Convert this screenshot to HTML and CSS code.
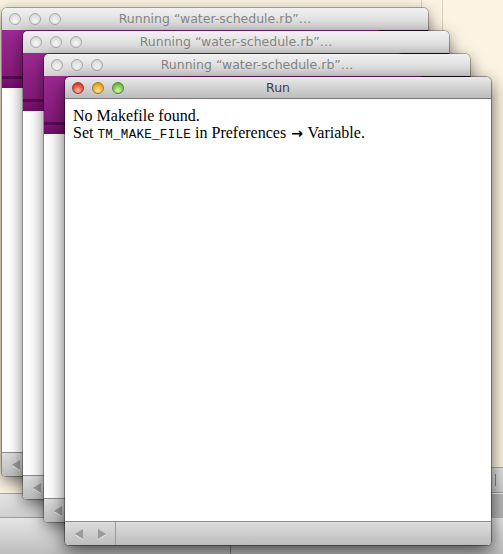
FILE: index.html
```html
<!DOCTYPE html>
<html>
<head>
<meta charset="utf-8">
<link rel="stylesheet" href="styles.css">
</head>
<body>
<div class="desk">
  <div class="bg-doc">
    <span class="gutter g1"></span>
    <span class="gutter g2"></span>
  </div>
  <div class="bg-bar bar-left"></div>
  <div class="bg-bar bar-right"><span class="grip"></span></div>
  <div class="bg-status"><span class="divider"></span></div>

  <div class="win back w1">
    <div class="titlebar">
      <div class="lights"><span class="light"></span><span class="light"></span><span class="light"></span></div>
      <div class="title">Running “water-schedule.rb”…</div>
    </div>
    <div class="toolbar"></div>
    <div class="content"></div>
    <div class="bottombar"><span class="tri tri-left"></span></div>
  </div>

  <div class="win back w2">
    <div class="titlebar">
      <div class="lights"><span class="light"></span><span class="light"></span><span class="light"></span></div>
      <div class="title">Running “water-schedule.rb”…</div>
    </div>
    <div class="toolbar"></div>
    <div class="content"></div>
    <div class="bottombar"><span class="tri tri-left"></span></div>
  </div>

  <div class="win back w3">
    <div class="titlebar">
      <div class="lights"><span class="light"></span><span class="light"></span><span class="light"></span></div>
      <div class="title">Running “water-schedule.rb”…</div>
    </div>
    <div class="toolbar"></div>
    <div class="content"></div>
    <div class="bottombar"><span class="tri tri-left"></span></div>
  </div>

  <div class="win front w4">
    <div class="titlebar">
      <div class="lights"><span class="light red"></span><span class="light yellow"></span><span class="light green"></span></div>
      <div class="title">Run</div>
    </div>
    <div class="content output">
      <p>No Makefile found.</p>
      <p>Set <code>TM_MAKE_FILE</code> in Preferences <span class="arrow">→</span> Variable.</p>
    </div>
    <div class="bottombar"><span class="tri tri-left"></span><span class="tri tri-right"></span><span class="sep"></span></div>
  </div>
</div>
</body>
</html>
```

FILE: styles.css
```css
html, body {
  margin: 0;
  padding: 0;
}
body {
  width: 503px;
  height: 554px;
  overflow: hidden;
  background: #fbf4e2;
  font-family: "DejaVu Sans", sans-serif;
}
.desk {
  position: relative;
  width: 503px;
  height: 554px;
  overflow: hidden;
  background: linear-gradient(#c9c9c9, #b4b4b4);
}

/* background document window */
.bg-doc {
  position: absolute;
  left: 0;
  top: 0;
  width: 503px;
  height: 494px;
  background: #fcf4e2;
}
.gutter {
  position: absolute;
  top: 0;
  bottom: 0;
  width: 1px;
  background: #d9d1bd;
}
.g1 { left: 421px; }
.g2 { left: 442px; }

.bg-bar {
  position: absolute;
  background: linear-gradient(#e4e4e4, #cfcfcf);
  border-top: 1px solid #a9a9a9;
  border-bottom: 1px solid #9a9a9a;
}
.bar-left {
  left: 0;
  top: 493px;
  width: 80px;
  height: 23px;
}
.bar-right {
  left: 470px;
  top: 467px;
  width: 40px;
  height: 24px;
}
.grip {
  position: absolute;
  left: 25px;
  top: 6px;
  width: 1px;
  height: 12px;
  background: #8a8a8a;
}
.bg-status {
  position: absolute;
  left: 0;
  top: 518px;
  width: 503px;
  height: 36px;
  background: linear-gradient(#e6e6e6, #bdbdbd);
}
.divider {
  position: absolute;
  left: 230px;
  top: 0;
  bottom: 0;
  width: 1px;
  background: #7d7d7d;
}

/* windows */
.win {
  position: absolute;
  width: 426px;
  height: 468px;
  display: flex;
  flex-direction: column;
  border-radius: 5px 5px 4px 4px;
  overflow: hidden;
  background: #fff;
  box-shadow: 0 0 0 1px rgba(0, 0, 0, 0.28), 0 5px 16px rgba(0, 0, 0, 0.55);
}
.w4 {
  box-shadow: 0 0 0 1px rgba(0, 0, 0, 0.35), 0 6px 18px rgba(0, 0, 0, 0.65);
}
.w1 { left: 2px; top: 8px; }
.w2 { left: 23px; top: 31px; }
.w3 { left: 44px; top: 54px; }
.w4 { left: 65px; top: 77px; }

.titlebar {
  height: 22px;
  flex: none;
  display: grid;
  grid-template-columns: 1fr auto 1fr;
  align-items: center;
  background: linear-gradient(#f1f1f1, #d3d3d3);
  box-sizing: border-box;
}
.front .titlebar {
  background: linear-gradient(#e9e9e9, #bcbcbc);
  border-bottom: 1px solid #787878;
}
.lights {
  display: flex;
  gap: 8px;
  padding-left: 7px;
}
.light {
  width: 12px;
  height: 12px;
  border-radius: 50%;
  box-sizing: border-box;
  border: 1px solid #a9a9a9;
  background: radial-gradient(circle at 50% 70%, #fafafa 0%, #e2e2e2 55%, #cdcdcd 100%);
}
.light.red {
  border-color: #9b3a32;
  background: radial-gradient(circle at 50% 75%, #ffc4b8 0%, #ee5c50 45%, #c3261b 100%);
}
.light.yellow {
  border-color: #a67526;
  background: radial-gradient(circle at 50% 75%, #ffe7a6 0%, #f6b73f 45%, #cf8515 100%);
}
.light.green {
  border-color: #4b8a2e;
  background: radial-gradient(circle at 50% 75%, #dcf5b2 0%, #8fcf5e 45%, #4f9b2a 100%);
}
.title {
  font-size: 12.5px;
  color: #868686;
  white-space: nowrap;
  text-align: center;
  line-height: 22px;
}
.front .title {
  color: #3e3e3e;
}

.toolbar {
  height: 58px;
  flex: none;
  box-sizing: border-box;
  background:
    linear-gradient(to right, rgba(0,0,0,0) 0%, rgba(0,0,0,0) 88%, rgba(20,4,20,0.85) 89%, rgba(20,4,20,0.85) 100%),
    linear-gradient(#9c2993, #841a78 80%, #5a0a55 80%, #5a0a55 84%, #7f1477 84%, #6d0f66 100%);
}
.content {
  flex: 1;
  background: #fff;
}
.output {
  padding: 8px 8px;
  font-family: "Liberation Serif", "Times New Roman", serif;
  font-size: 16px;
  line-height: 17px;
  color: #000;
}
.output p {
  margin: 0;
}
.output code {
  font-family: "Liberation Mono", "Courier New", monospace;
  font-size: 12.5px;
  letter-spacing: 0.3px;
}
.arrow {
  font-family: "DejaVu Sans", sans-serif;
  font-size: 14px;
  font-weight: bold;
  padding: 0 1px;
}

.bottombar {
  height: 24px;
  flex: none;
  box-sizing: border-box;
  border-top: 1px solid #8d8d8d;
  background: linear-gradient(#dddddd, #bdbdbd);
  display: flex;
  align-items: center;
  padding-left: 10px;
}
.tri {
  width: 0;
  height: 0;
  border-top: 5px solid transparent;
  border-bottom: 5px solid transparent;
  filter: drop-shadow(0 1px 0 rgba(255,255,255,0.6));
}
.tri-left {
  border-right: 8px solid #9a9a9a;
}
.tri-right {
  border-left: 8px solid #9a9a9a;
  margin-left: 15px;
}
.sep {
  width: 1px;
  align-self: stretch;
  background: #9a9a9a;
  margin-left: 9px;
}
```
